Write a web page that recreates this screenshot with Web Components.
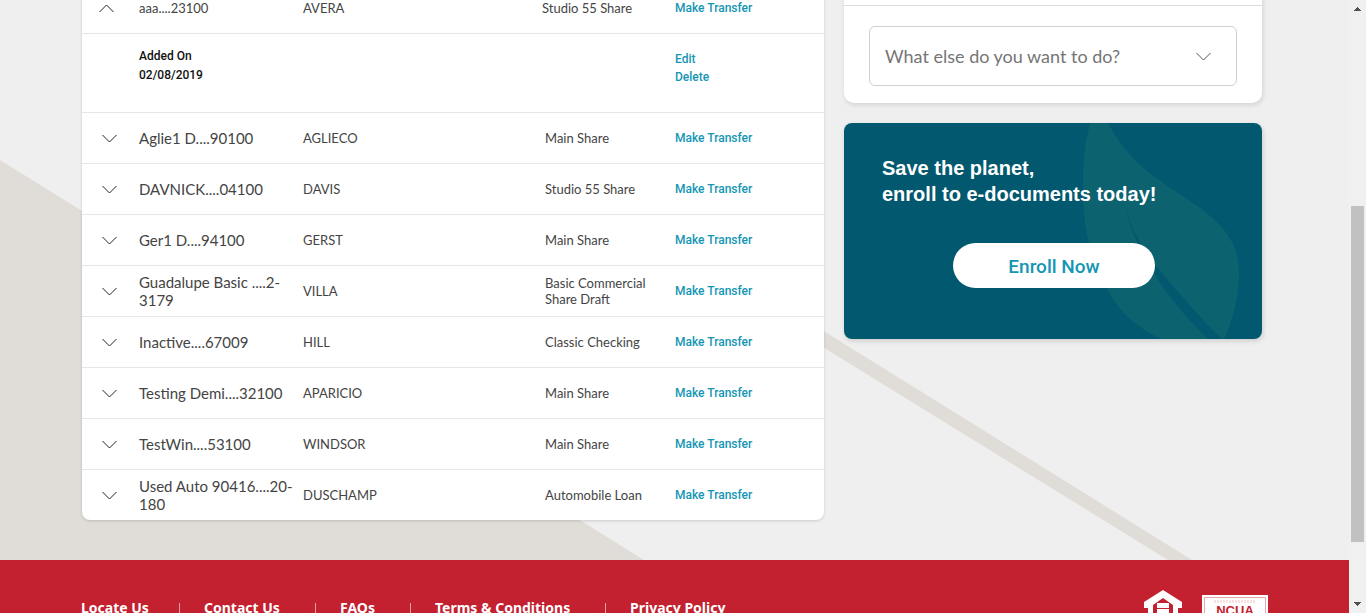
<!DOCTYPE html>
<html lang="en">
<head>
<meta charset="utf-8">
<title>Transfer accounts</title>
<style>
html,body{margin:0;height:100%;overflow:hidden}
body{font-family:Lato,"Liberation Sans",sans-serif;color:#444;background:#efefef}
</style>
</head>
<body>
<app-shell>
  <account-table></account-table>
  <quick-actions slot="side"></quick-actions>
  <promo-card slot="side"></promo-card>
  <site-footer slot="footer"></site-footer>
</app-shell>
<script>
const chevron = dir => `<svg width="15" height="9" viewBox="0 0 15 9" fill="none" stroke="currentColor" aria-hidden="true"><path d="${dir === 'up' ? 'M.5 8 7.500 1l7 7' : 'M.5 1 7.500 8l7-7'}"/></svg>`;

const define = (name, html, setup) => customElements.define(name, class extends HTMLElement {
  constructor() {
    super();
    const t = document.createElement('template');
    t.innerHTML = html;
    this.attachShadow({mode: 'open'}).append(t.content.cloneNode(true));
    if (setup) setup(this.shadowRoot);
  }
});

define('scroll-rail', `
<style>
:host{display:flex;flex-direction:column;background:#f0f0f0}
svg{display:block;width:17px;height:17px}
.track{flex:1;display:grid;grid-template-rows:189fr 336fr 54fr;padding:0 2px}
.thumb{grid-row:2;background:#c1c1c1}
</style>
<svg viewBox="0 0 17 17" fill="#505050"><path d="M8 7h1v1h1v1h1v1h1v1H5v-1h1V9h1V8h1z"/></svg>
<div class="track"><div class="thumb"></div></div>
<svg viewBox="0 0 17 17" fill="#505050"><path d="M5 6h7v1h-1v1h-1v1H9v1H8V9H7V8H6V7H5z"/></svg>`);

define('app-shell', `
<style>
:host{display:grid;grid-template-columns:minmax(0,1fr) 17px;height:100vh;overflow:hidden}
.page{display:flex;flex-direction:column;overflow:hidden;min-height:0}
main{position:relative;z-index:0;flex:none;display:grid;grid-template-columns:minmax(0,1fr) 418px;gap:20px;align-items:start;padding:0 87px 40px 82px;margin-top:-18px;background:#efefef}
.bg{position:absolute;z-index:-1;left:0;top:18px;width:1349px;height:560px}
.side{display:flex;flex-direction:column;gap:20px}
</style>
<div class="page">
<main>
<svg class="bg" viewBox="0 0 1349 560" fill="#e0ddd8" aria-hidden="true"><path d="M0 160 644 560H0z"/><path d="M724 269 1192 560h-24L724 286z"/></svg>
<slot></slot>
<div class="side"><slot name="side"></slot></div>
</main>
<slot name="footer"></slot>
</div>
<scroll-rail></scroll-rail>`);

define('account-table', `
<style>
:host{display:block;background:#fff;border-radius:8px;box-shadow:0 1px 3px rgba(0,0,0,.15);overflow:hidden}
table{width:100%;border-collapse:separate;border-spacing:0;table-layout:fixed}
.c1{width:57px}.c2{width:164px}.c3{width:234px}.c4{width:138px}
td{box-sizing:border-box;height:51px;padding:0;border-top:1px solid #e6e7ea;font-size:13px;line-height:16px;vertical-align:middle}
.icon{padding-left:20px}
.name{font-size:15px;line-height:18px;padding-right:8px}
.type{padding-left:8px}
tr.open .icon{padding-left:17px}
tr.open .name{font-size:13px}
tr.open .type{padding-left:5px}
button{display:block;margin:0;padding:0;border:0;background:none;color:#222;cursor:pointer}
svg{display:block}
a{display:block;width:max-content;color:#1496b4;text-decoration:none;font:500 12px/18px Roboto,sans-serif}
tr.detail td{height:79px;vertical-align:top}
tr.detail .added{padding-top:13px;color:#111;font:500 12px/19px Roboto,sans-serif}
tr.detail .acts{padding-top:16px}
</style>
<table aria-label="Accounts"><colgroup><col class="c1"><col class="c2"><col class="c3"><col class="c4"><col></colgroup><tbody></tbody></table>`,
root => {
  const rows = [
    ['aaa....23100', 'AVERA', 'Studio 55 Share', true],
    ['Aglie1 D....90100', 'AGLIECO', 'Main Share'],
    ['DAVNICK....04100', 'DAVIS', 'Studio 55 Share'],
    ['Ger1 D....94100', 'GERST', 'Main Share'],
    ['Guadalupe Basic ....2-3179', 'VILLA', 'Basic Commercial Share Draft'],
    ['Inactive....67009', 'HILL', 'Classic Checking'],
    ['Testing Demi....32100', 'APARICIO', 'Main Share'],
    ['TestWin....53100', 'WINDSOR', 'Main Share'],
    ['Used Auto 90416....20-180', 'DUSCHAMP', 'Automobile Loan']
  ];
  root.querySelector('tbody').innerHTML = rows.map(([name, owner, type, open]) => `
    <tr class="${open ? 'open' : ''}"><td class="icon"><button type="button" aria-label="Details of ${name}" aria-expanded="${!!open}">${chevron(open ? 'up' : 'down')}</button></td>
    <td class="name">${name}</td><td>${owner}</td><td class="type">${type}</td><td><a href="#transfer">Make Transfer</a></td></tr>` +
    (open ? `<tr class="detail"><td></td><td class="added">Added On<br>02/08/2019</td><td></td><td></td><td class="acts"><a href="#edit">Edit</a><a href="#delete">Delete</a></td></tr>` : '')).join('');
});

define('quick-actions', `
<style>
:host{display:block;background:#fff;border-radius:10px;box-shadow:1px 2px 5px rgba(0,0,0,.12)}
.head{height:23px;border-bottom:1px solid #dcdcdc}
.body{padding:20px 25px 17px}
.field{display:grid;align-items:center;color:#555}
select,svg{grid-area:1/1}
select{appearance:none;width:100%;height:60px;margin:0;padding:0 40px 0 15px;border:1px solid #cfcfcf;border-radius:6px;background:#fff;color:#757575;font:18px/24px Lato,sans-serif}
svg{justify-self:end;margin-right:26px;pointer-events:none}
</style>
<div class="head"></div>
<div class="body"><div class="field"><select aria-label="What else do you want to do?"><option>What else do you want to do?</option></select>${chevron('down')}</div></div>`);

define('promo-card', `
<style>
:host{position:relative;display:flex;flex-direction:column;box-sizing:border-box;min-height:216px;padding:32px 38px 51px;background:#02586e;border-radius:8px;box-shadow:1px 2px 5px rgba(0,0,0,.15);overflow:hidden}
.leaf{position:absolute;right:0;top:0;width:418px;height:216px}
h2{position:relative;margin:0;color:#fff;font:bold 20px/26px "Liberation Sans",Arial,sans-serif;white-space:nowrap}
button{position:relative;align-self:center;width:202px;height:45px;margin:36px 0 0 2px;padding:2px 0 0;border:0;border-radius:23px;background:#fff;color:#1496b4;font:500 19px/24px Roboto,sans-serif;cursor:pointer}
</style>
<svg class="leaf" viewBox="0 0 418 216" aria-hidden="true"><path fill="#0d6270" d="M246 0h18c25 46 56 59 89 83 33 23 42 42 42 69 0 22-7 48-15 64h-62c-29-13-45-30-57-54-16-32-22-58-22-100 0-24 2-42 7-62z"/><path fill="#02586e" d="M280 80c10 38 28 58 47 81 18 20 32 37 51 55h-14c-34-32-72-82-84-136z"/></svg>
<h2>Save the planet,<br>enroll to e-documents today!</h2>
<button type="button">Enroll Now</button>`);

define('site-footer', `
<style>
:host{flex:none;display:flex;justify-content:space-between;align-items:flex-start;box-sizing:border-box;min-height:120px;padding:30px 81px 30px 81px;background:#c32030}
nav{display:grid;grid-template-columns:98px 136px 95px 195px auto;margin-top:8px}
a{color:#fff;text-decoration:none;white-space:nowrap;font:bold 14px/20px "Noto Sans",sans-serif}
nav a+a{padding-left:25px;background:linear-gradient(#d9a0a5,#d9a0a5) 0 5px/1px 15px no-repeat}
.logos{display:flex;gap:20px;align-items:flex-start}
.ncua{box-sizing:border-box;width:66px;height:44px;margin-top:5px;padding:2px;background:#fff}
.ncua div{box-sizing:border-box;height:40px;border:1px solid #e9a5ab;padding-top:5px;text-align:center;color:#c32030;font:bold 13px/16px "Liberation Sans",sans-serif;background:repeating-linear-gradient(90deg,#f8dfe1 0 2px,#fff 2px 3px) 9px 2px/42px 3px no-repeat}
</style>
<nav aria-label="Footer"><a href="#locate">Locate Us</a><a href="#contact">Contact Us</a><a href="#faqs">FAQs</a><a href="#terms">Terms &amp; Conditions</a><a href="#privacy">Privacy Policy</a></nav>
<div class="logos">
<svg width="38" height="44" viewBox="0 0 38 44" fill="#fff" role="img" aria-label="Equal housing lender"><path fill-rule="evenodd" d="M19 0 38 12v6h-4v24H4V18H0v-6zM9 15v22h20V15L19 8z"/><path d="M13 13h12v5H13zM13 19h12v5H13z"/></svg>
<div class="ncua"><div>NCUA</div></div>
</div>`);
</script>
</body>
</html>
